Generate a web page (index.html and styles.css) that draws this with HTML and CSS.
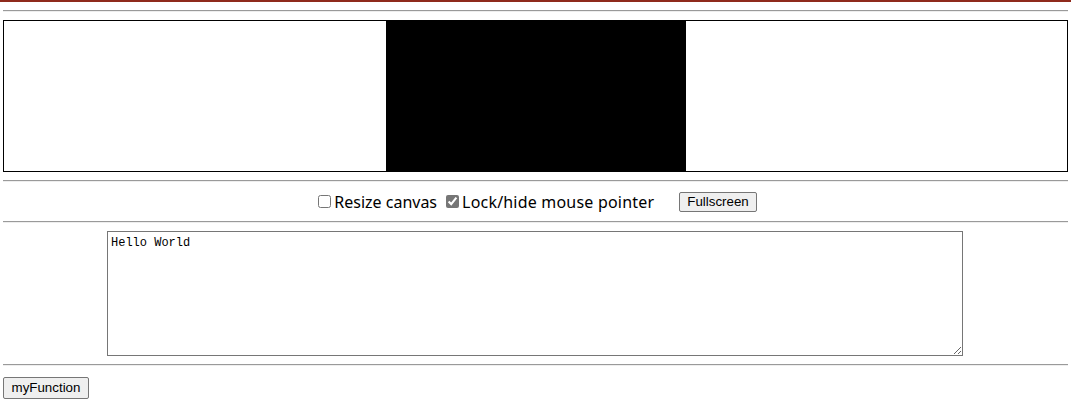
FILE: index.html
```html
<!DOCTYPE html>
<html>
<head>
<meta charset="utf-8">
<link rel="stylesheet" href="styles.css">
</head>
<body>
<div class="topbar"></div>
<hr class="rule">
<div class="canvas-border">
  <div class="canvas"></div>
</div>
<hr class="rule">
<div class="controls">
  <label class="check"><input type="checkbox">Resize canvas</label>
  <label class="check"><input type="checkbox" checked>Lock/hide mouse pointer</label>
  <button class="btn fs">Fullscreen</button>
</div>
<hr class="rule">
<textarea class="output" rows="8">Hello World</textarea>
<hr class="rule">
<div class="bottom">
  <button class="btn fn">myFunction</button>
</div>
</body>
</html>
```
FILE: styles.css
```css
html, body { margin: 0; padding: 0; background: #fff; }
body { padding: 0 3px; font-family: "Noto Sans", "Liberation Sans", sans-serif; font-size: 16px; color: #000; }
.topbar { height: 2px; background: #8f2a1c; margin: 0 -3px; }
.rule { margin: 8px 0; border: 0; border-top: 1px solid #9a9a9a; border-bottom: 1px solid #eeeeee; height: 0; }
.canvas-border { border: 1px solid #000; }
.canvas { width: 300px; height: 150px; background: #000; margin: 0 auto; }
.controls { display: flex; justify-content: center; align-items: center; height: 23px; }
.check { display: inline-flex; align-items: center; margin-right: 5px; line-height: 20px; }
.check input { width: 13px; height: 13px; margin: 0 3px 0 4px; accent-color: #767676; }
.check + .check { letter-spacing: 0.2px; }
.btn { font-family: "Liberation Sans", Arial, sans-serif; font-size: 13.33px; padding: 1px 7px; border: 1px solid #767676; border-radius: 2px; background: #efefef; color: #000; line-height: 16px; }
.fs { margin-left: 20px; height: 20px; }
.output { display: block; box-sizing: border-box; width: 856px; height: 125px; margin: 0 0 1px 104px; font-family: "Liberation Mono", monospace; font-size: 12px; padding: 4px 3px 2px; border: 1px solid #767676; resize: both; }
.bottom { display: flex; padding-top: 3px; }
.fn { height: 22px; width: 86px; }
```
